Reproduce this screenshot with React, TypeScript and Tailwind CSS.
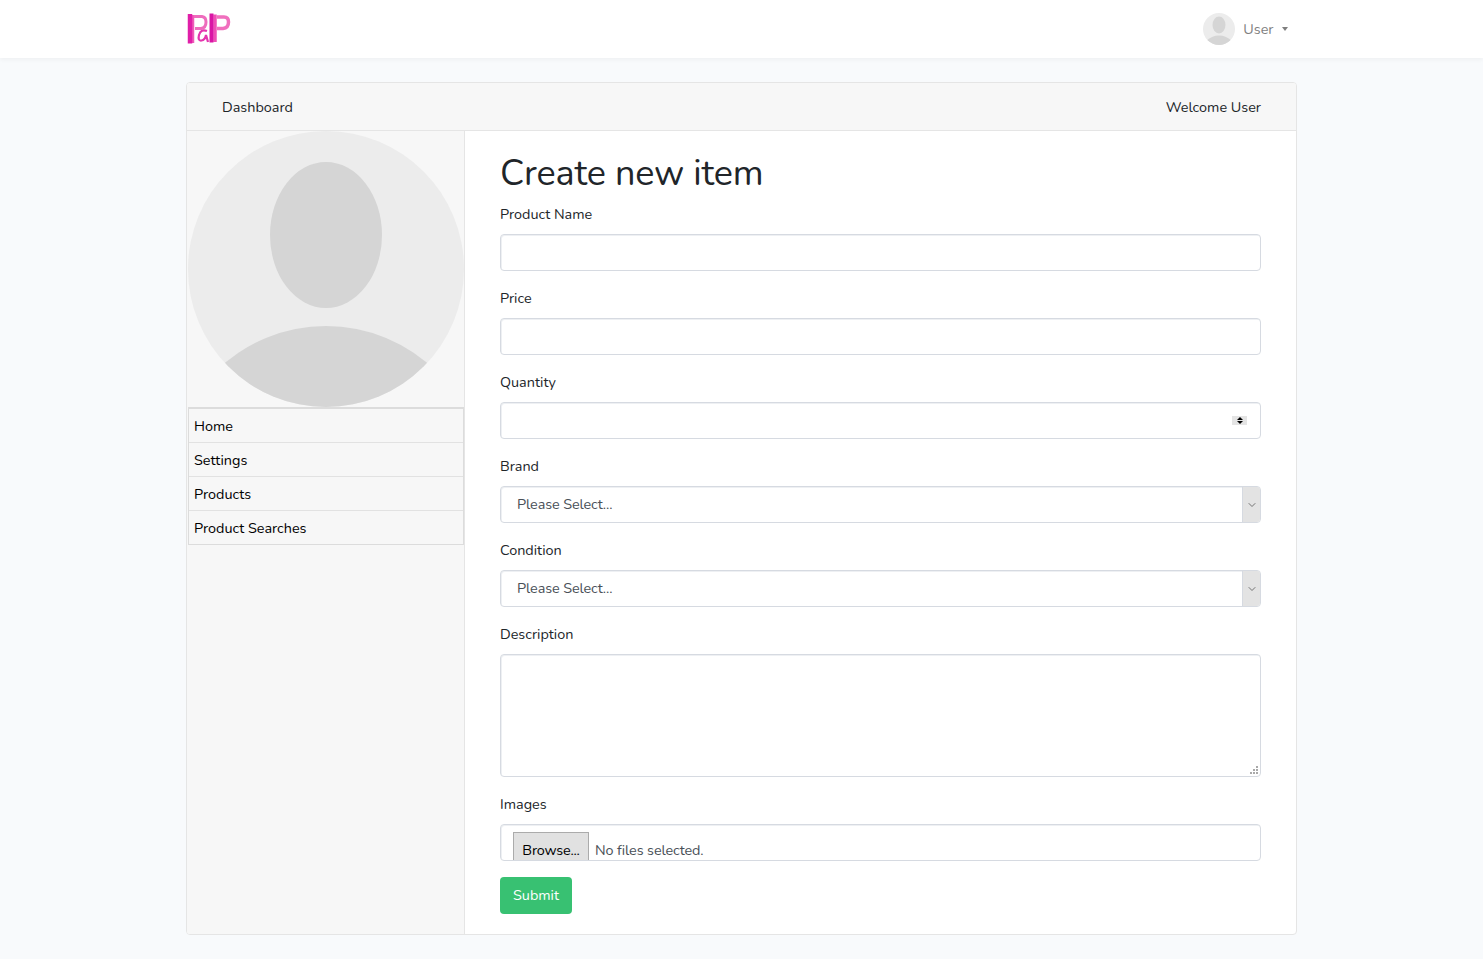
import React from "react";
import { ChevronDown } from "lucide-react";

const fontStack = "font-['Nunito','Lato','Noto_Sans',sans-serif]";

const Logo = () => (
  <svg width="44" height="32" viewBox="0 0 44 32" fill="none">
    <path d="M6 2 V30" stroke="#ee5bb8" strokeWidth="2.5" />
    <path d="M3 1 V30.5" stroke="#e01fa8" strokeWidth="4.5" />
    <path d="M7 3.5 H15 Q19 4 19 9 Q19 15 14 15.5 H8" stroke="#ee6cbd" strokeWidth="3" />
    <path d="M20 18 Q14 15.5 12 22 Q10.5 28 14.5 27.5 Q18 27 19 22 L21 29" stroke="#e435ae" strokeWidth="2.2" />
    <path d="M28 1.5 V29" stroke="#ee4fb4" strokeWidth="3.5" />
    <path d="M24.5 0.5 V29.5" stroke="#d916a5" strokeWidth="4" />
    <path d="M30 4 H37 Q41.5 4 41.5 9 Q41.5 15 36 15.5 H30" stroke="#f06fbd" strokeWidth="3.5" />
  </svg>
);

const Avatar = ({ size }: { size: number }) => (
  <svg width={size} height={size} viewBox="0 0 276 276" className="block">
    <defs>
      <clipPath id={`avatar-${size}`}>
        <circle cx="138" cy="138" r="138" />
      </clipPath>
    </defs>
    <circle cx="138" cy="138" r="138" fill="#ececec" />
    <ellipse cx="138" cy="104" rx="56" ry="73" fill="#d5d5d5" />
    <circle cx="138" cy="352" r="157" fill="#d5d5d5" clipPath={`url(#avatar-${size})`} />
  </svg>
);

const inputClass =
  "block w-full h-[37px] rounded-[4px] border border-[#d6dae1] bg-white px-3 text-[14.4px] text-[#495057] outline-none shadow-[inset_1px_1px_0_#eef0f3]";

const Field = ({ label, children }: { label: string; children: React.ReactNode }) => (
  <div className="mb-[16px]">
    <label className="mb-2 block h-[23px] text-[14.4px] leading-[23px] text-[#212529]">{label}</label>
    {children}
  </div>
);

const SelectBox = () => (
  <div className="flex h-[37px] w-full overflow-hidden rounded-[4px] border border-[#d6dae1] bg-white shadow-[inset_1px_1px_0_#eef0f3]">
    <div className="flex-1 pl-4 text-[14.4px] leading-[34px] tracking-[-0.1px] text-[#495057]">Please Select...</div>
    <div className="flex w-[18px] items-center justify-center border-l border-[#d6dae1] bg-[#e3e3e3]">
      <ChevronDown size={12} strokeWidth={1.6} className="text-[#555555]" />
    </div>
  </div>
);

const menu = ["Home", "Settings", "Products", "Product Searches"];

export default function App() {
  return (
    <div className={`min-h-screen bg-[#f8fafc] ${fontStack}`}>
      <nav className="h-[58px] bg-white shadow-[0_2px_4px_rgba(0,0,0,0.04)]">
        <div className="mx-auto flex h-full w-[1140px] items-center justify-between pl-[15px] pr-[24px]">
          <Logo />
          <div className="flex items-center">
            <Avatar size={32} />
            <span className="ml-2 pt-px text-[14.4px] text-[#7f7f7f]">User</span>
            <span className="ml-2 h-0 w-0 border-x-[3.5px] border-t-[4px] border-x-transparent border-t-[#7f7f7f]" />
          </div>
        </div>
      </nav>

      <main className="mx-auto mt-6 w-[1111px]">
        <div className="overflow-hidden rounded-[4px] border border-[#e5e5e5] bg-white">
          <div className="flex h-[48px] items-center justify-between border-b border-[#e5e5e5] bg-[#f7f7f7] px-[35px] pt-[2px] text-[14.4px] text-[#212529]">
            <span>Dashboard</span>
            <span>Welcome User</span>
          </div>

          <div className="flex">
            <aside className="w-[278px] shrink-0 border-r border-[#e5e5e5] bg-[#f7f7f7]">
              <div className="pl-px">
                <Avatar size={276} />
              </div>
              <ul className="ml-px w-[276px] border border-t-2 border-[#dcdcdc] text-[14.4px] text-black">
                {menu.map((item, i) => (
                  <li
                    key={item}
                    className={`flex items-center pl-[5px] pt-[2px] ${i < menu.length - 1 ? "h-[34px] border-b border-[#e2e2e2]" : "h-[33px]"}`}
                  >
                    {item}
                  </li>
                ))}
              </ul>
            </aside>

            <section className="flex-1 px-[35px] pb-[20px] pt-[21px]">
              <h1 className="mb-2 text-[36px] leading-[43px] font-normal tracking-[-0.14px] text-[#212529]">Create new item</h1>

              <Field label="Product Name">
                <input className={inputClass} />
              </Field>
              <Field label="Price">
                <input className={inputClass} />
              </Field>
              <Field label="Quantity">
                <div className="relative">
                  <input className={inputClass} />
                  <div className="absolute right-[14px] top-[14px] flex h-[9px] w-[15px] flex-col items-center justify-center gap-px bg-[#e4e4e4]">
                    <span className="h-0 w-0 border-x-[3px] border-b-[3px] border-x-transparent border-b-black" />
                    <span className="h-0 w-0 border-x-[3px] border-t-[3px] border-x-transparent border-t-black" />
                  </div>
                </div>
              </Field>
              <Field label="Brand">
                <SelectBox />
              </Field>
              <Field label="Condition">
                <SelectBox />
              </Field>
              <Field label="Description">
                <div className="relative">
                  <textarea className="block h-[123px] w-full resize-none rounded-[4px] border border-[#d6dae1] bg-white px-3 text-[14.4px] outline-none shadow-[inset_1px_1px_0_#eef0f3]" />
                  <svg width="9" height="9" viewBox="0 0 9 9" className="absolute bottom-[2px] right-[2px]" fill="#a9a9a9">
                    <rect x="6" y="0" width="2" height="2" />
                    <rect x="3" y="3" width="2" height="2" />
                    <rect x="6" y="3" width="2" height="2" />
                    <rect x="0" y="6" width="2" height="2" />
                    <rect x="3" y="6" width="2" height="2" />
                    <rect x="6" y="6" width="2" height="2" />
                  </svg>
                </div>
              </Field>
              <Field label="Images">
                <div className="flex h-[37px] items-start overflow-hidden rounded-[4px] border border-[#d6dae1] bg-white pl-[12px] pt-[7px] shadow-[inset_1px_1px_0_#eef0f3]">
                  <div className="h-[36px] w-[76px] shrink-0 border border-[#ababab] bg-[#e1e1e1] text-center text-[14.4px] leading-[35px] tracking-[-0.2px] text-black">
                    Browse...
                  </div>
                  <span className="ml-[6px] text-[14.4px] leading-[37px] tracking-[-0.1px] text-[#495057]">No files selected.</span>
                </div>
              </Field>

              <button className="h-[37px] w-[72px] rounded-[4px] bg-[#38c172] text-[14.4px] text-white">Submit</button>
            </section>
          </div>
        </div>
      </main>
    </div>
  );
}
